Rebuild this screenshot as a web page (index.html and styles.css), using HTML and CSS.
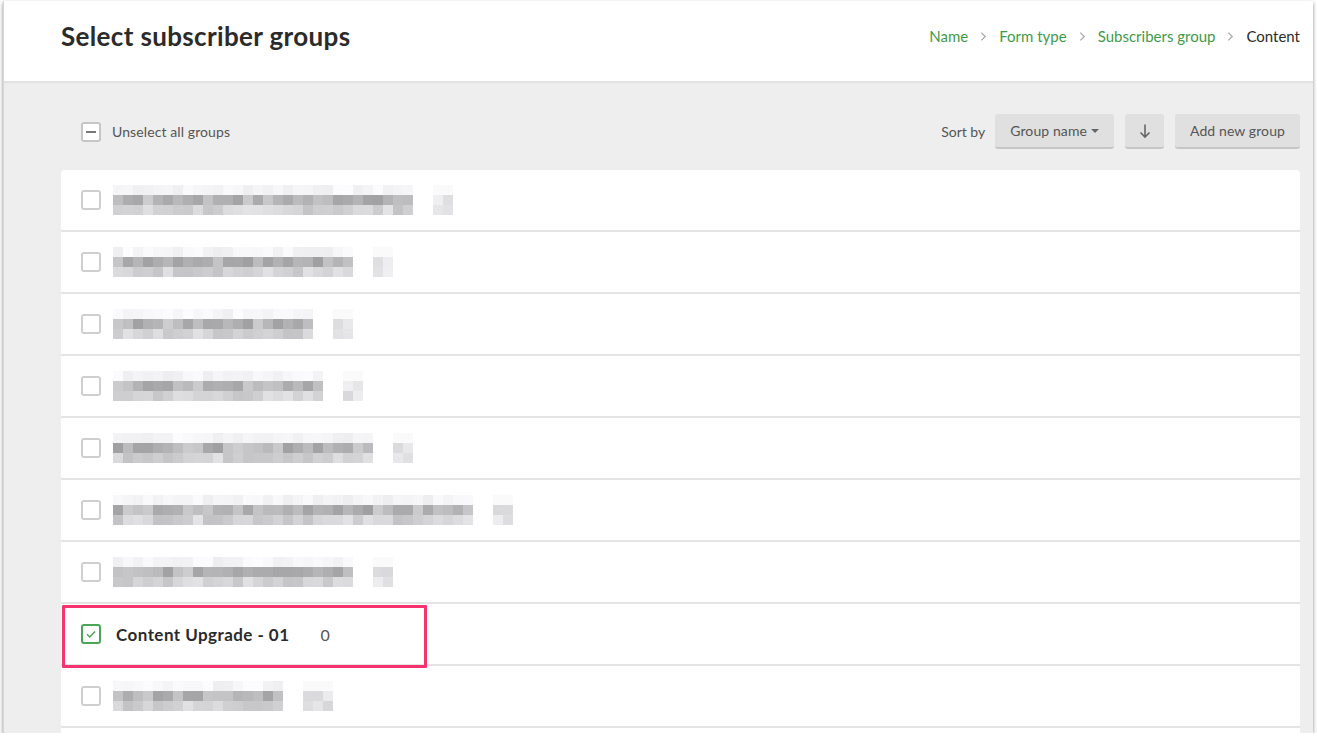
FILE: index.html
```html
<!DOCTYPE html>
<html lang="en">
<head>
    <meta charset="UTF-8">
    <title>Select subscriber groups</title>
    <link rel="stylesheet" href="styles.css">
</head>
<body>
    <div class="ventana">
        <header class="cabecera">
            <h1>Select subscriber groups</h1>
            <nav class="migas">
                <a>Name</a>
                <svg class="chevron" viewBox="0 0 8 12"><path d="M1.5 1.5 L6 6 L1.5 10.5" /></svg>
                <a>Form type</a>
                <svg class="chevron" viewBox="0 0 8 12"><path d="M1.5 1.5 L6 6 L1.5 10.5" /></svg>
                <a>Subscribers group</a>
                <svg class="chevron" viewBox="0 0 8 12"><path d="M1.5 1.5 L6 6 L1.5 10.5" /></svg>
                <span class="actual">Content</span>
            </nav>
        </header>

        <main class="contenido">
            <div class="barra">
                <label class="todos">
                    <span class="caja caja-parcial"></span>
                    Unselect all groups
                </label>
                <div class="orden">
                    <span class="orden-label">Sort by</span>
                    <button class="boton">Group name <span class="flecha"></span></button>
                    <button class="boton boton-icono">
                        <svg viewBox="0 0 12 16"><path d="M6 1.5 V14 M1.5 9.5 L6 14 L10.5 9.5" /></svg>
                    </button>
                    <button class="boton">Add new group</button>
                </div>
            </div>

            <div class="lista">
                <div class="fila"><span class="caja"></span><div class="borroso" data-n="30" data-c="2"></div></div>
                <div class="fila"><span class="caja"></span><div class="borroso" data-n="24" data-c="2"></div></div>
                <div class="fila"><span class="caja"></span><div class="borroso" data-n="20" data-c="2"></div></div>
                <div class="fila"><span class="caja"></span><div class="borroso" data-n="21" data-c="2"></div></div>
                <div class="fila"><span class="caja"></span><div class="borroso" data-n="26" data-c="2"></div></div>
                <div class="fila"><span class="caja"></span><div class="borroso" data-n="36" data-c="2"></div></div>
                <div class="fila"><span class="caja"></span><div class="borroso" data-n="24" data-c="2"></div></div>
                <div class="fila fila-marcada">
                    <span class="caja caja-ok">
                        <svg viewBox="0 0 12 12"><path d="M2 6.2 L4.8 9 L10 3.4" /></svg>
                    </span>
                    <span class="nombre">Content Upgrade - 01</span>
                    <span class="cuenta">0</span>
                    <div class="resaltado"></div>
                </div>
                <div class="fila"><span class="caja"></span><div class="borroso" data-n="17" data-c="3"></div></div>
                <div class="fila"><span class="caja"></span><div class="borroso" data-n="22" data-c="2"></div></div>
            </div>
        </main>
    </div>

    <script src="script.js"></script>
</body>
</html>
```

FILE: styles.css
```css
body {
    margin: 0;
    background: #fff;
    font-family: 'Lato', 'Open Sans', sans-serif;
    color: #333;
}

.ventana {
    margin: 1px 4px 0 3px;
    height: 732px;
    overflow: hidden;
    border-left: 1px solid #d6d6d6;
    box-shadow: 0 2px 4px rgba(0,0,0,0.45);
    background: #eeeeee;
}

.cabecera {
    height: 80px;
    background: #fff;
    border-bottom: 2px solid #e2e2e2;
    display: flex;
    align-items: center;
    justify-content: space-between;
    padding: 0 13px 0 57px;
}

.cabecera h1 {
    margin: 0 0 10px;
    font-size: 26px;
    font-weight: 700;
    color: #2b2b2b;
    letter-spacing: 0.35px;
}

.migas {
    display: flex;
    align-items: center;
    gap: 12px;
    font-size: 15px;
    margin-bottom: 10px;
}

.migas a {
    color: #3f9a4b;
}

.migas .actual {
    color: #2b2b2b;
}

.chevron {
    width: 7px;
    height: 11px;
    fill: none;
    stroke: #a8a8a8;
    stroke-width: 1.4;
}

.contenido {
    padding: 31px 13px 0 57px;
}

.barra {
    display: flex;
    justify-content: space-between;
    align-items: center;
    padding-left: 20px;
    margin-bottom: 21px;
}

.todos {
    display: flex;
    align-items: center;
    gap: 11px;
    font-size: 14px;
    color: #555;
    letter-spacing: 0.1px;
}

.orden {
    display: flex;
    align-items: center;
    gap: 11px;
}

.orden-label {
    font-size: 14px;
    color: #555;
    margin-right: -1px;
}

.boton {
    height: 35px;
    padding: 0 15px;
    background: #e0e0e0;
    border: none;
    border-bottom: 2px solid #c6c6c6;
    border-radius: 3px;
    font-family: 'Lato', 'Open Sans', sans-serif;
    font-size: 14px;
    color: #555;
    display: flex;
    align-items: center;
    gap: 4px;
    letter-spacing: 0.1px;
}

.flecha {
    width: 0;
    height: 0;
    border-left: 4px solid transparent;
    border-right: 4px solid transparent;
    border-top: 4px solid #666;
    margin-top: 1px;
}

.boton-icono {
    width: 39px;
    justify-content: center;
    padding: 0;
}

.boton-icono svg {
    width: 12px;
    height: 16px;
    fill: none;
    stroke: #666;
    stroke-width: 1.6;
}

.lista {
    background: #fff;
    border-radius: 4px 4px 0 0;
}

.fila {
    height: 60px;
    border-bottom: 2px solid #e4e4e4;
    display: flex;
    align-items: center;
    padding-left: 20px;
    position: relative;
}

.caja {
    width: 16px;
    height: 16px;
    border: 2px solid #cfcfcf;
    border-radius: 3px;
    flex-shrink: 0;
    display: flex;
    align-items: center;
    justify-content: center;
    background: #fff;
}

.caja-parcial {
    border-color: #c6c6c6;
}

.caja-parcial::after {
    content: '';
    width: 10px;
    height: 2px;
    background: #777;
}

.caja-ok {
    border-color: #4aa656;
}

.caja-ok svg {
    width: 12px;
    height: 12px;
    fill: none;
    stroke: #4aa656;
    stroke-width: 1.5;
}

.borroso {
    margin-left: 12px;
    display: flex;
    flex-direction: column;
}

.borroso .tira {
    display: flex;
    height: 10px;
}

.borroso .tira span {
    width: 10px;
    height: 10px;
    flex-shrink: 0;
}

.nombre {
    margin-left: 15px;
    font-size: 17px;
    font-weight: 700;
    color: #2b2b2b;
    letter-spacing: 0.45px;
}

.cuenta {
    margin-left: 31px;
    font-size: 16px;
    color: #555;
}

.resaltado {
    position: absolute;
    left: 1px;
    top: 1px;
    width: 359px;
    height: 57px;
    border: 3px solid #f7336f;
    border-radius: 1px;
}
```

FILE: script.js
```js
// mosaico gris para los nombres ocultos
let semilla = 7;
function azar() {
    semilla = (semilla * 9301 + 49297) % 233280;
    return semilla / 233280;
}

function gris(min, max) {
    const v = Math.round(min + azar() * (max - min));
    return 'rgb(' + v + ',' + v + ',' + (v + 2) + ')';
}

document.querySelectorAll('.borroso').forEach(function(b) {
    const n = parseInt(b.dataset.n, 10);
    const c = parseInt(b.dataset.c, 10);
    const total = n + 2 + c;
    const rangos = [[238, 252], [160, 205], [195, 228]];

    rangos.forEach(function(r, i) {
        const tira = document.createElement('div');
        tira.className = 'tira';
        for (let k = 0; k < total; k++) {
            const s = document.createElement('span');
            if (k < n) {
                s.style.background = gris(r[0], r[1]);
            } else if (k >= n + 2) {
                s.style.background = i === 0 ? '#fafafa' : gris(215, 240);
            }
            tira.appendChild(s);
        }
        b.appendChild(tira);
    });
});
```
